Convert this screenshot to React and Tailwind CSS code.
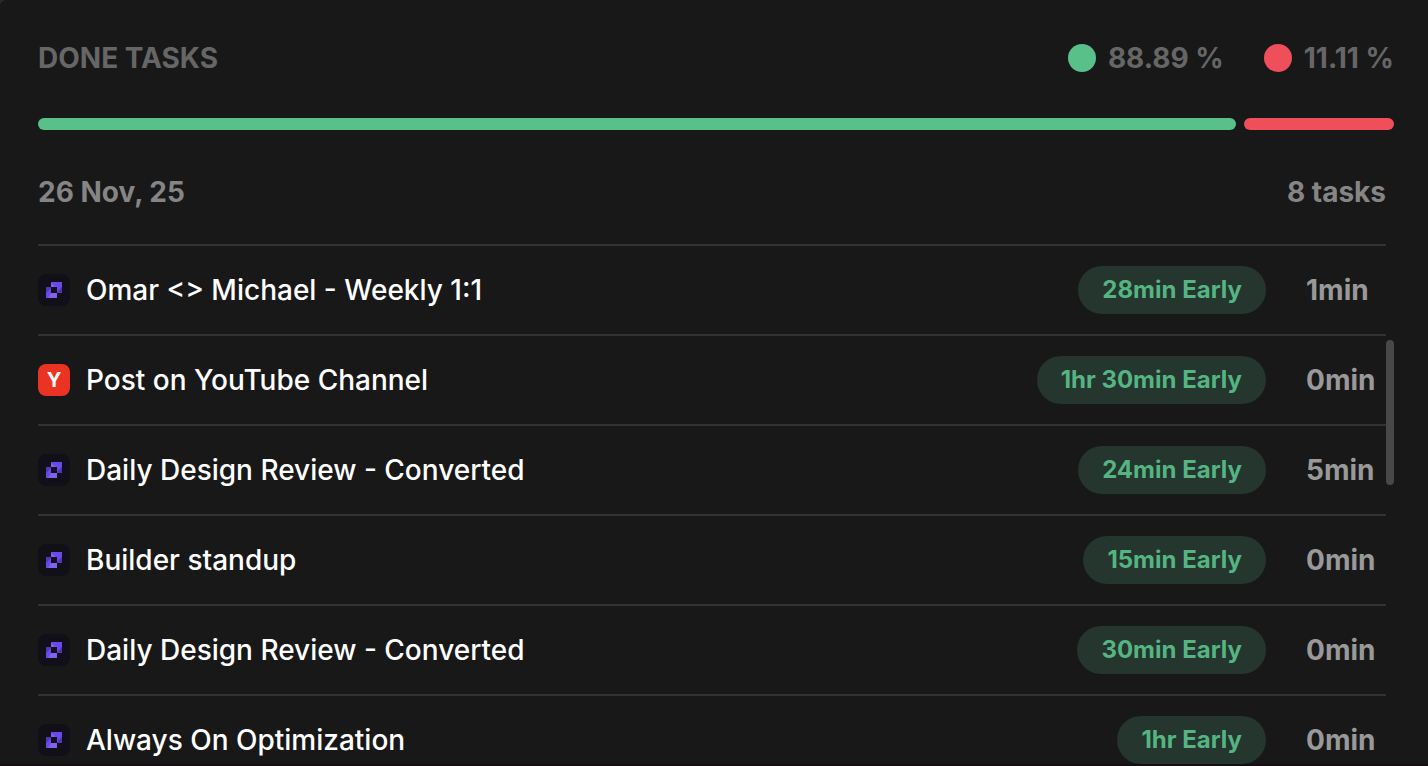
import React from 'react';
import clsx from 'clsx';

const stats = [
  { id: 'early', value: 88.89, color: 'bg-[#59c08a]' },
  { id: 'late', value: 11.11, color: 'bg-[#ee4f5a]' },
];

const tasks = [
  { id: 1, title: 'Omar <> Michael - Weekly 1:1', early: '28min Early', duration: '1min', icon: 'builder' },
  { id: 2, title: 'Post on YouTube Channel', early: '1hr 30min Early', duration: '0min', icon: 'youtube' },
  { id: 3, title: 'Daily Design Review - Converted', early: '24min Early', duration: '5min', icon: 'builder' },
  { id: 4, title: 'Builder standup', early: '15min Early', duration: '0min', icon: 'builder' },
  { id: 5, title: 'Daily Design Review - Converted', early: '30min Early', duration: '0min', icon: 'builder' },
  { id: 6, title: 'Always On Optimization', early: '1hr Early', duration: '0min', icon: 'builder' },
];

const ProjectIcon = ({ type }) => {
  if (type === 'youtube') {
    return (
      <span className="flex h-8 w-8 shrink-0 items-center justify-center rounded-lg bg-[#ea3323] text-xl font-bold text-white">
        Y
      </span>
    );
  }

  return (
    <span className="h-8 w-8 shrink-0 rounded-lg bg-[#110f18]">
      <svg viewBox="0 0 32 32" className="h-8 w-8" aria-hidden="true">
        <path d="M13 8h11v11h-5v-6h-6z" fill="#6a49ea" />
        <path d="M24 13v6h-5v-1z" fill="#4f37b8" />
        <path d="M13 9v4h5z" fill="#8460ee" />
        <path d="M8 13h5v6h6v5H8z" fill="#6a49ea" />
        <path d="M8 13h5v1l-5 5z" fill="#4f37b8" />
        <path d="M13 19h6v5h-9z" fill="#8460ee" />
      </svg>
    </span>
  );
};

const TaskRow = ({ task }) => (
  <li className="flex h-[90px] items-center border-t-2 border-[#333333]">
    <ProjectIcon type={task.icon} />
    <span className="ml-4 min-w-0 flex-1 truncate text-[28px] leading-9 font-medium text-white">
      {task.title}
    </span>
    <span className="rounded-full bg-[#24362e] px-6 text-2xl leading-[48px] font-bold whitespace-nowrap text-[#55b482]">
      {task.early}
    </span>
    <span className="ml-10 w-20 shrink-0 text-[28px] leading-9 font-bold text-[#999999]">
      {task.duration}
    </span>
  </li>
);

const App = () => {
  return (
    <div className="h-screen bg-[#2a2a2a] font-['Inter',sans-serif]">
      <main className="flex h-full flex-col overflow-hidden rounded-tl-md border-b-2 border-[#150f13] bg-[#181818] pt-10 pr-[34px] pl-[38px]">
        {/* Header */}
        <header className="flex items-center justify-between text-[28px] leading-9 font-bold text-[#666666]">
          <h1>DONE TASKS</h1>
          <div className="flex gap-10">
            {stats.map((stat) => (
              <div key={stat.id} className="flex items-center gap-3">
                <span className={clsx('h-7 w-7 rounded-full', stat.color)} />
                <span>{stat.value} %</span>
              </div>
            ))}
          </div>
        </header>

        {/* Ratio bar */}
        <div className="mt-[42px] flex gap-2">
          {stats.map((stat) => (
            <div
              key={stat.id}
              className={clsx('h-3 rounded-full', stat.color)}
              style={{ flex: `${stat.value} 1 0%` }}
            />
          ))}
        </div>

        {/* Task list */}
        <section className="relative mt-11 min-h-0 flex-1 overflow-hidden pr-2">
          <div className="mb-[34px] flex justify-between text-[28px] leading-9 font-bold text-[#858585]">
            <h2>26 Nov, 25</h2>
            <span>8 tasks</span>
          </div>
          <ul>
            {tasks.map((task) => (
              <TaskRow key={task.id} task={task} />
            ))}
          </ul>
          <div className="absolute top-[166px] right-0 h-[145px] w-2 rounded-full bg-[#484848]" />
        </section>
      </main>
    </div>
  );
};

export default App;
